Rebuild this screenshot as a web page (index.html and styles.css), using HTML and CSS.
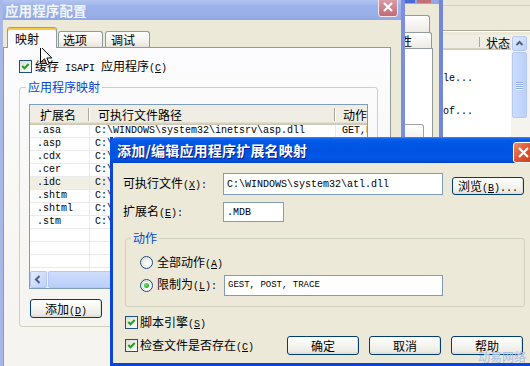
FILE: index.html
```html
<!DOCTYPE html>
<html lang="zh">
<head>
<meta charset="utf-8">
<title>应用程序配置</title>
<link rel="stylesheet" href="styles.css">
</head>
<body>
<div class="desk">

  <div class="win w3">
    <div class="w3-strip"></div>
    <div class="w3-tool"></div>
    <div class="w3-list">
      <div class="w3-main">
        <div class="w3-head"><span class="w3-c1"></span><span class="w3-c2">状态</span></div>
        <div class="w3-rows">
          <div class="w3-row m">le...</div>
          <div class="w3-row m">of...</div>
        </div>
      </div>
      <div class="vscroll">
        <div class="vs-up"><svg width="13" height="13" viewBox="0 0 13 13"><polyline points="3.5,8 6.5,5 9.5,8" fill="none" stroke="#4D6185" stroke-width="2"/></svg></div>
        <div class="vs-thumb"><span class="grip"></span><span class="grip"></span><span class="grip"></span><span class="grip"></span></div>
      </div>
      <div class="w3-edge"></div>
    </div>
  </div>

  <div class="win w2">
    <div class="w2-title"><span class="w2-b1"></span><span class="w2-b2"></span></div>
    <div class="w2-body">
      <div class="w2-tab1"></div>
      <div class="w2-tab2"><span>性</span></div>
      <div class="w2-panel"><div class="w2-btn"></div></div>
    </div>
  </div>

  <div class="win w1">
    <div class="w1-title">
      <span class="w1-tt">应用程序配置</span>
      <span class="w1-close"><svg width="18" height="18" viewBox="0 0 18 18"><path d="M5 5 L13 13 M13 5 L5 13" stroke="#fff" stroke-width="2"/></svg></span>
    </div>
    <div class="w1-body">
      <div class="tabs">
        <div class="tab act">映射</div>
        <div class="tab inact t2">选项</div>
        <div class="tab inact t3">调试</div>
      </div>
      <div class="panel">
        <div class="chk-row">
          <span class="cb"><svg width="11" height="11" viewBox="0 0 11 11"><polyline points="2.3,5 4.5,7.3 8.7,3" fill="none" stroke="#21A121" stroke-width="2"/></svg></span>
          <span class="lbl"><span>缓存</span><span class="m"> ISAPI </span><span>应用程序</span><span class="m">(<u>C</u>)</span></span>
        </div>
        <fieldset class="grp map-grp">
          <legend>应用程序映射</legend>
          <div class="lv">
            <div class="lv-head">
              <span class="hc c1">扩展名</span>
              <span class="hc c2">可执行文件路径</span>
              <span class="hc c3">动作</span>
            </div>
            <div class="lv-rows">
              <div class="row"><span class="rc c1 m">.asa</span><span class="rc c2 m">C:\WINDOWS\system32\inetsrv\asp.dll</span><span class="rc c3 m">GET,HEAD,POST,TRACE</span></div>
              <div class="row"><span class="rc c1 m">.asp</span><span class="rc c2 m">C:\WINDOWS\system32\inetsrv\asp.dll</span><span class="rc c3 m">GET,HEAD,POST,TRACE</span></div>
              <div class="row"><span class="rc c1 m">.cdx</span><span class="rc c2 m">C:\WINDOWS\system32\inetsrv\asp.dll</span><span class="rc c3 m">GET,HEAD,POST,TRACE</span></div>
              <div class="row"><span class="rc c1 m">.cer</span><span class="rc c2 m">C:\WINDOWS\system32\inetsrv\asp.dll</span><span class="rc c3 m">GET,HEAD,POST,TRACE</span></div>
              <div class="row hl"><span class="rc c1 m">.idc</span><span class="rc c2 m">C:\WINDOWS\system32\inetsrv\httpodbc.dll</span><span class="rc c3 m">OPTIONS,GET,HEAD,POST</span></div>
              <div class="row"><span class="rc c1 m">.shtm</span><span class="rc c2 m">C:\WINDOWS\system32\inetsrv\ssinc.dll</span><span class="rc c3 m">GET,POST</span></div>
              <div class="row"><span class="rc c1 m">.shtml</span><span class="rc c2 m">C:\WINDOWS\system32\inetsrv\ssinc.dll</span><span class="rc c3 m">GET,POST</span></div>
              <div class="row"><span class="rc c1 m">.stm</span><span class="rc c2 m">C:\WINDOWS\system32\inetsrv\ssinc.dll</span><span class="rc c3 m">GET,POST</span></div>
              <div class="row"><span class="rc c1"></span><span class="rc c2"></span><span class="rc c3"></span></div>
              <div class="row"><span class="rc c1"></span><span class="rc c2"></span><span class="rc c3"></span></div>
              <div class="row"><span class="rc c1"></span><span class="rc c2"></span><span class="rc c3"></span></div>
              <div class="row"><span class="rc c1"></span><span class="rc c2"></span><span class="rc c3"></span></div>
            </div>
            <div class="hscroll">
              <span class="hs-left"><svg width="15" height="15" viewBox="0 0 15 15"><polyline points="8.5,4 5,7.5 8.5,11" fill="none" stroke="#4D6185" stroke-width="2"/></svg></span>
              <span class="hs-thumb"></span>
            </div>
          </div>
          <div class="btn add"><span>添加</span><span class="m">(<u>D</u>)</span></div>
        </fieldset>
      </div>
    </div>
  </div>

  <div class="dlg">
    <div class="dlg-title">
      <span class="dt">添加/编辑应用程序扩展名映射</span>
      <span class="dclose"><svg width="19" height="19" viewBox="0 0 19 19"><path d="M5 5 L14 14 M14 5 L5 14" stroke="#fff" stroke-width="2.2"/></svg></span>
    </div>
    <div class="dlg-body">
      <div class="f-row r1">
        <span class="flbl"><span>可执行文件</span><span class="m">(<u>X</u>):</span></span>
        <span class="inp in1 m">C:\WINDOWS\system32\atl.dll</span>
        <span class="btn browse"><span>浏览</span><span class="m">(<u>B</u>)...</span></span>
      </div>
      <div class="f-row r2">
        <span class="flbl"><span>扩展名</span><span class="m">(<u>E</u>):</span></span>
        <span class="inp in2 m">.MDB</span>
      </div>
      <fieldset class="grp act-grp">
        <legend>动作</legend>
        <div class="rrow rr1"><span class="rd"></span><span class="rtxt"><span>全部动作</span><span class="m">(<u>A</u>)</span></span></div>
        <div class="rrow rr2"><span class="rd on"><i></i></span><span class="rtxt rlbl"><span>限制为</span><span class="m">(<u>L</u>):</span></span><span class="inp in3 m">GEST, POST, TRACE</span></div>
      </fieldset>
      <div class="c-row cr1">
        <span class="cb"><svg width="11" height="11" viewBox="0 0 11 11"><polyline points="2.3,5 4.5,7.3 8.7,3" fill="none" stroke="#21A121" stroke-width="2"/></svg></span>
        <span class="ctxt"><span>脚本引擎</span><span class="m">(<u>S</u>)</span></span>
      </div>
      <div class="c-row cr2">
        <span class="cb"><svg width="11" height="11" viewBox="0 0 11 11"><polyline points="2.3,5 4.5,7.3 8.7,3" fill="none" stroke="#21A121" stroke-width="2"/></svg></span>
        <span class="ctxt cl2"><span>检查文件是否存在</span><span class="m">(<u>C</u>)</span></span>
        <span class="btn dbtn">确定</span>
        <span class="btn dbtn">取消</span>
        <span class="btn dbtn">帮助</span>
      </div>
    </div>
  </div>

  <svg class="cursor" width="14" height="21" viewBox="0 0 14 21"><path d="M0.5 0.5 V16.5 L4.5 12.8 L7 18.8 L9.3 17.8 L6.9 12 H11.8 Z" fill="#fff" stroke="#000"/></svg>
  <div class="wm">动易网络</div>
</div>
</body>
</html>
```

FILE: styles.css
```css
* { box-sizing: border-box; }
html, body { margin: 0; padding: 0; width: 530px; height: 366px; overflow: hidden; background: #ECE9D8; }
body { font-family: "Noto Sans CJK SC", "Noto Sans", sans-serif; font-size: 12px; color: #000; }
.desk { position: relative; width: 530px; height: 366px; overflow: hidden; }
.m { font-family: "Liberation Mono", monospace; font-size: 10px; }
u { text-decoration: underline; text-underline-offset: 1px; }
.win { position: absolute; top: 0; }

/* ---------- window 3 (far back) ---------- */
.w3 { left: 443px; width: 87px; height: 140px; background: #ECE9D8; display: flex; flex-direction: column; }
.w3-strip { height: 6px; border-bottom: 1px solid #D3D0C1; }
.w3-tool { height: 25px; border-bottom: 1px solid #ACA899; box-shadow: 0 1px #fff; }
.w3-list { margin-top: 4px; display: flex; flex: 1; }
.w3-main { width: 68px; display: flex; flex-direction: column; background: #fff; }
.w3-head { height: 15px; display: flex; background: #EFEDE4; box-shadow: inset 0 -1px #CBC7B8, inset 0 -2px #D6D2C2; }
.w3-c1 { width: 37px; margin: 2px 0 3px; border-right: 1px solid #ACA899; }
.w3-c2 { padding-left: 6px; line-height: 15px; white-space: nowrap; overflow: hidden; }
.w3-rows { padding-top: 21px; }
.w3-row { height: 16px; line-height: 16px; margin-bottom: 17px; white-space: nowrap; }
.vscroll { width: 16px; background: #F4F3EE; display: flex; flex-direction: column; align-items: center; }
.vs-up { width: 15px; height: 15px; margin-top: 1px; border: 1px solid #B4C8F6; border-radius: 2px; background: linear-gradient(135deg, #E3EBFE, #BCD0FA); display: flex; align-items: center; justify-content: center; }
.vs-thumb { width: 15px; height: 66px; margin-top: 1px; border: 1px solid #B4C8F6; border-radius: 2px; background: linear-gradient(90deg, #CFDDFC, #BACFFA); display: flex; flex-direction: column; align-items: center; justify-content: center; gap: 1px; }
.grip { width: 7px; height: 1px; background: #8CA9EC; box-shadow: 0 1px #EEF3FE; }
.w3-edge { flex: 1; background: #F4F3EE; }

/* ---------- window 2 ---------- */
.w2 { left: 405px; width: 38px; height: 140px; border-right: 4px solid #7287D9; background: #ECE9D8; }
.w2-title { height: 4px; background: #93A8E4; display: flex; }
.w2-b1 { width: 10px; height: 3px; background: #4A6BD6; }
.w2-b2 { width: 14px; height: 3px; margin-left: 2px; background: #C46E78; }
.w2-body { padding-top: 11px; }
.w2-tab1 { width: 25px; height: 17px; border: 1px solid #919B9C; border-left: 0; border-bottom: 0; border-radius: 0 3px 0 0; background: linear-gradient(#fff, #ECEBE6); }
.w2-tab2 { width: 27px; height: 16px; border: 1px solid #919B9C; border-left: 0; border-bottom: 0; border-radius: 0 3px 0 0; background: linear-gradient(#fff, #ECEBE6); overflow: hidden; line-height: 15px; white-space: nowrap; }
.w2-tab2 span { display: inline-block; margin-left: -5px; }
.w2-panel { width: 28px; height: 92px; border-right: 1px solid #919B9C; border-top: 1px solid #919B9C; background: #fff; padding-top: 75px; }
.w2-btn { width: 19px; height: 20px; border: 1px solid #A3A29A; border-left: 0; border-radius: 0 3px 3px 0; background: linear-gradient(#fff, #ECEBE6); }

/* ---------- window 1 ---------- */
.w1 { left: 0; width: 405px; height: 380px; border-left: 3px solid #A9B7E7; border-right: 4px solid #7B8FDC; background: #ECE9D8; display: flex; flex-direction: column; }
.w1-title { height: 20px; flex: none; display: flex; background: linear-gradient(#B4C5F0, #9DB3EA 30%, #97AEE7 80%, #8FA7E3); }
.w1-tt { padding-left: 2px; font-size: 13.5px; font-weight: 700; line-height: 20px; color: #F3F6FD; letter-spacing: 0.1px; }
.w1-close { margin-left: auto; margin-right: 3px; margin-top: -3px; width: 20px; height: 20px; border: 1px solid #F1E6EA; border-radius: 3px; background: linear-gradient(#DBA3AB, #C06B77); display: flex; align-items: center; justify-content: center; }
.w1-body { flex: 1; }
.tabs { display: flex; align-items: flex-end; height: 21px; margin: 7px 0 -1px 4px; position: relative; z-index: 2; }
.tab { border: 1px solid #919B9C; border-bottom: 0; border-radius: 3px 3px 0 0; white-space: nowrap; }
.tab.act { width: 50px; height: 21px; padding: 3px 0 0 7px; line-height: 16px; background: #FCFCFE; border-top: 1px solid #E68B2C; box-shadow: inset 0 2px #FFC83C; }
.tab.inact { width: 45px; height: 16px; margin-bottom: 1px; line-height: 15px; background: linear-gradient(#FFFFFF, #F3F2ED 60%, #E6E4DA); }
.t2 { margin-left: 1px; padding-left: 4px; }
.t3 { margin-left: 2px; padding-left: 5px; }
.panel { width: 388px; height: 340px; border: 1px solid #919B9C; background: linear-gradient(#FCFCFE, #F6F5F1 70%, #F4F3EE); padding: 12px 0 0 15px; }
.chk-row { display: flex; align-items: center; height: 13px; gap: 3px; }
.lbl, .ctxt, .rtxt, .flbl { line-height: 13px; white-space: pre; }
.cb { width: 13px; height: 13px; flex: none; border: 1px solid #1C5180; background: linear-gradient(135deg, #DCDCD7, #FFFFFF); display: flex; align-items: center; justify-content: center; }
.grp { margin: 0; border: 1px solid #D0D0BF; border-radius: 3px; min-width: 0; }
.grp legend { color: #0046D5; line-height: 16px; padding: 0 2px; white-space: nowrap; }
.map-grp { width: 359px; margin-top: 6px; padding: 9px 9px 8px 9px; }
.map-grp legend { margin-left: -3px; }

.lv { width: 339px; height: 185px; border: 1px solid #7F9DB9; background: #fff; display: flex; flex-direction: column; overflow: hidden; }
.lv-head { height: 20px; flex: none; display: flex; background: #EFEDE4; box-shadow: inset 0 -1px #CBC7B8, inset 0 -2px #D6D2C2, inset 0 -3px #E2DECD; }
.hc { position: relative; line-height: 19px; white-space: nowrap; overflow: hidden; }
.hc.c1::after, .hc.c2::after { content: ""; position: absolute; right: 0; top: 3px; height: 13px; border-left: 1px solid #ACA899; border-right: 1px solid #fff; }
.c1 { width: 60px; flex: none; }
.c2 { width: 246px; flex: none; }
.c3 { flex: 1; }
.hc.c1 { padding-left: 10px; }
.hc.c2 { padding-left: 8px; }
.hc.c3 { padding-left: 7px; }
.lv-rows { flex: 1; overflow: hidden; }
.row { height: 13px; display: flex; border-bottom: 1px solid #EAEAEA; }
.row.hl { background: #F1EFE4; }
.rc { line-height: 12px; white-space: nowrap; overflow: hidden; }
.rc.c1 { padding-left: 7px; border-right: 1px solid #EAEAEA; }
.rc.c2 { padding-left: 5px; border-right: 1px solid #EAEAEA; }
.rc.c3 { padding-left: 6px; }
.hscroll { height: 17px; flex: none; display: flex; background: #F4F3EE; }
.hs-left { width: 17px; height: 17px; border: 1px solid #B4C8F6; border-radius: 2px; background: linear-gradient(135deg, #E3EBFE, #BCD0FA); display: flex; align-items: center; justify-content: center; }
.hs-thumb { width: 220px; height: 17px; margin-left: 1px; border: 1px solid #B4C8F6; border-radius: 2px; background: linear-gradient(#CFDDFC, #BACFFA); }

.btn { border: 1px solid #003C74; border-radius: 3px; background: linear-gradient(#FFFFFF, #F5F5F1 45%, #ECEBE6 85%, #D8D2C6); display: flex; align-items: baseline; justify-content: center; padding-top: 1px; white-space: nowrap; line-height: 15px; box-shadow: inset -1px -1px #E3E0D5; }
.add { width: 72px; height: 19px; margin: 10px 0 0 1px; }

/* ---------- front dialog ---------- */
.dlg { position: absolute; left: 110px; top: 137px; width: 429px; height: 229px; border: 3px solid #0A45DB; border-top: 0; display: flex; flex-direction: column; background: #ECE9D8; }
.dlg-title { height: 26px; flex: none; margin: 0 -3px; padding-left: 7px; border-radius: 7px 7px 0 0; display: flex; background: linear-gradient(#3E8CF6 0, #0C5EEA 2px, #0057E5 6px, #0053E0 14px, #0057E8 20px, #004FD9 24px, #0040C4 26px); }
.dt { color: #fff; font-size: 14px; font-weight: 700; line-height: 27px; text-shadow: 1px 1px #0A1883; white-space: nowrap; letter-spacing: 0.2px; }
.dclose { margin-left: auto; margin-right: 5px; margin-top: 5px; width: 21px; height: 21px; border: 1px solid #fff; border-radius: 3px; background: linear-gradient(135deg, #F08E6E, #E0532E 50%, #C8401E); display: flex; align-items: center; justify-content: center; }
.dlg-body { flex: 1; padding-left: 10px; }
.f-row { display: flex; align-items: center; }
.r1 { margin-top: 10px; height: 22px; }
.r2 { margin-top: 7px; height: 20px; }
.flbl { width: 100px; flex: none; }
.inp { border: 1px solid #7F9DB9; background: #fff; display: flex; align-items: center; padding-left: 3px; white-space: nowrap; overflow: hidden; }
.in1 { width: 220px; height: 22px; }
.in2 { width: 61px; height: 20px; }
.browse { width: 72px; height: 18px; margin-left: 9px; align-self: flex-start; margin-top: 4px; padding-top: 0; }
.act-grp { width: 400px; margin: 8px 0 0 2px; padding: 6px 0 10px 14px; }
.act-grp legend { margin-left: -9px; }
.rrow { display: flex; align-items: center; }
.rr1 { height: 21px; }
.rr2 { height: 22px; margin-top: 1px; }
.rd { width: 13px; height: 13px; flex: none; border-radius: 50%; border: 1px solid #1C5180; background: radial-gradient(circle at 65% 65%, #FFFFFF 20%, #E4E3DC 70%, #D2D1C8); margin-right: 4px; display: flex; align-items: center; justify-content: center; }
.rd.on i { display: block; width: 5px; height: 5px; border-radius: 50%; background: radial-gradient(circle at 35% 35%, #6FE06A, #189A14); }
.rlbl { width: 67px; flex: none; }
.in3 { width: 219px; height: 21px; font-size: 9px; }
.c-row { display: flex; align-items: center; margin-left: 2px; gap: 2px; }
.cr1 { margin-top: 9px; height: 13px; }
.cr2 { margin-top: 7px; height: 19px; }
.cl2 { width: 145px; flex: none; }
.dbtn { width: 72px; height: 19px; margin-right: 8px; }

.cursor { position: absolute; left: 40px; top: 46px; }
.wm { position: absolute; left: 478px; top: 350px; font-size: 12px; line-height: 14px; color: #A7BDE6; letter-spacing: 0; }
```
